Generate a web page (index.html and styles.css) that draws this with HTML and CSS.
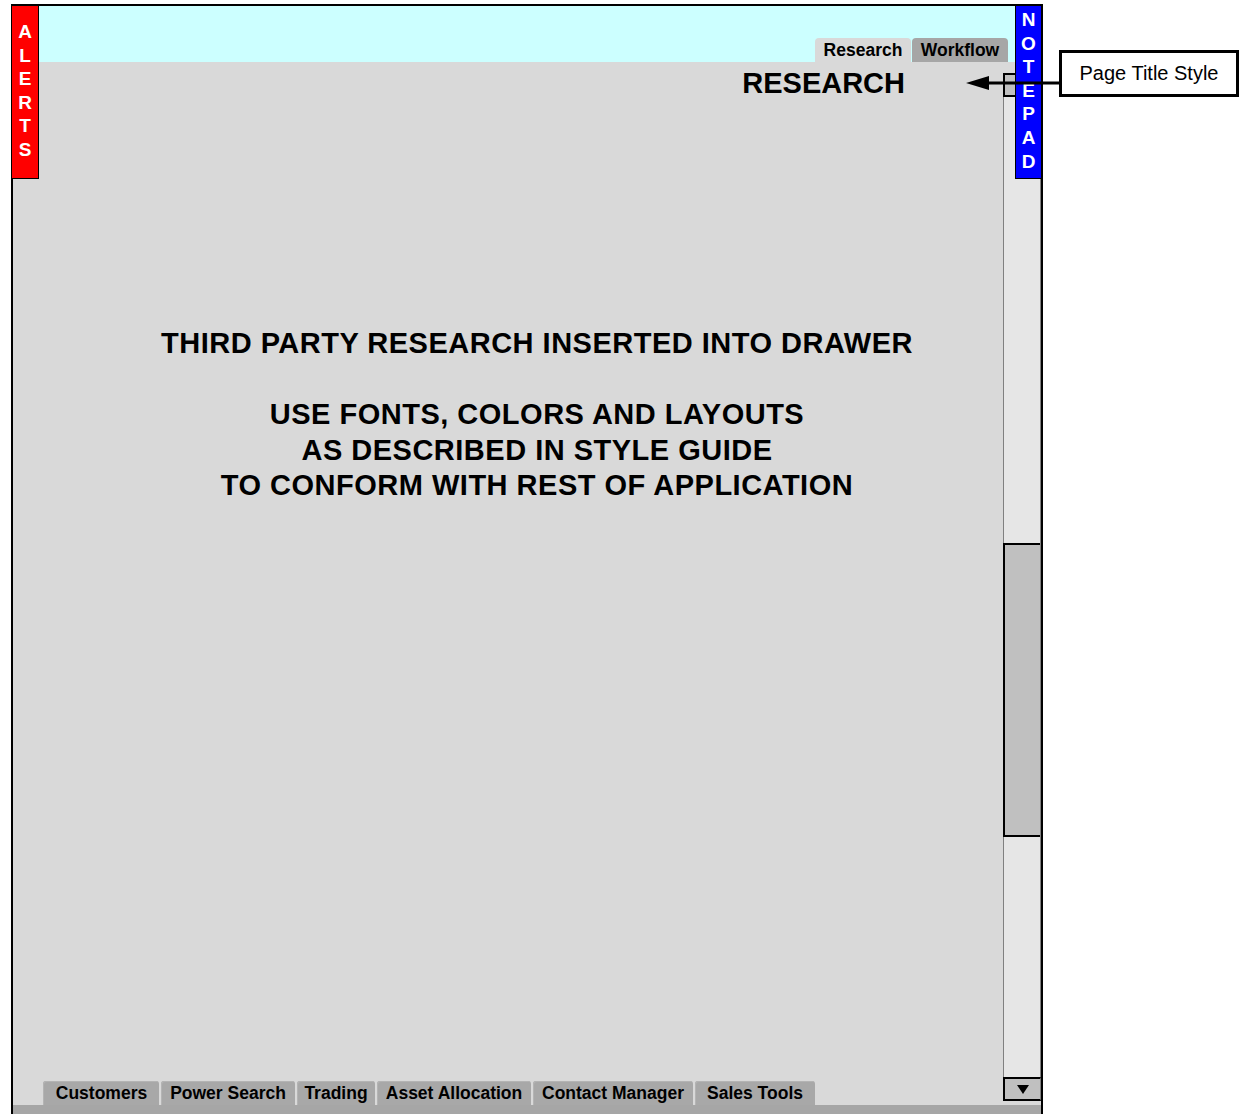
FILE: index.html
```html
<!DOCTYPE html>
<html lang="en">
<head>
<meta charset="utf-8">
<title>Research</title>
<link rel="stylesheet" href="styles.css">
</head>
<body>
<div class="frame">
  <header class="header">
    <nav class="top-tabs">
      <span class="top-tab top-tab--active">Research</span>
      <span class="top-tab">Workflow</span>
    </nav>
  </header>

  <div class="body">
    <main class="main">
      <h1 class="page-title">RESEARCH</h1>
      <div class="message">
        <p class="message-line">THIRD PARTY RESEARCH INSERTED INTO DRAWER</p>
        <p class="message-line message-line--gap">USE FONTS, COLORS AND LAYOUTS</p>
        <p class="message-line">AS DESCRIBED IN STYLE GUIDE</p>
        <p class="message-line">TO CONFORM WITH REST OF APPLICATION</p>
      </div>
      <nav class="bottom-tabs">
        <span class="bottom-tab tab-customers">Customers</span>
        <span class="bottom-tab tab-power">Power Search</span>
        <span class="bottom-tab tab-trading">Trading</span>
        <span class="bottom-tab tab-asset">Asset Allocation</span>
        <span class="bottom-tab tab-contact">Contact Manager</span>
        <span class="bottom-tab tab-sales">Sales Tools</span>
      </nav>
    </main>

    <div class="scrollbar">
      <div class="scroll-btn scroll-btn--up"></div>
      <div class="scroll-track">
        <div class="scroll-thumb"></div>
      </div>
      <div class="scroll-btn scroll-btn--down"><span class="tri-down"></span></div>
    </div>
  </div>

  <div class="bottom-strip"></div>

  <div class="drawer drawer--alerts">
    <span>A</span><span>L</span><span>E</span><span>R</span><span>T</span><span>S</span>
  </div>
  <div class="drawer drawer--notepad">
    <span>N</span><span>O</span><span>T</span><span>E</span><span>P</span><span>A</span><span>D</span>
  </div>
</div>

<!-- annotation: arrow pointing at the page title, with its label -->
<svg class="callout-arrow" width="94" height="18" viewBox="0 0 94 18">
  <polygon points="0,8 23,1 23,15" fill="#000"/>
  <rect x="20" y="6.5" width="74" height="3" fill="#000"/>
</svg>
<div class="callout">Page Title Style</div>
</body>
</html>
```

FILE: styles.css
```css
html, body {
  margin: 0;
  padding: 0;
  background: #ffffff;
  overflow: hidden;
}

body {
  width: 1245px;
  height: 1114px;
  position: relative;
  font-family: "Liberation Sans", Arial, sans-serif;
  color: #000;
}

/* application window */
.frame {
  position: absolute;
  left: 11px;
  top: 4px;
  width: 1028px;
  border: 2px solid #000;
  background: #d9d9d9;
  display: flex;
  flex-direction: column;
}

.header {
  height: 56px;
  background: #ccffff;
  display: flex;
  justify-content: flex-end;
  align-items: flex-end;
  padding-right: 33px;
}

.top-tabs {
  display: flex;
  gap: 1px;
}

.top-tab {
  width: 96px;
  height: 24px;
  line-height: 24px;
  text-align: center;
  font-size: 17.5px;
  font-weight: bold;
  background: #a6a6a6;
  border-radius: 4px 4px 0 0;
}

.top-tab--active {
  background: #d9d9d9;
}

.body {
  height: 1043px;
  display: flex;
}

.main {
  flex: 1;
  display: flex;
  flex-direction: column;
  padding-left: 30px;
}

.page-title {
  margin: 4px 0 0 0;
  padding-right: 98px;
  text-align: right;
  font-size: 29px;
  line-height: 34px;
  font-weight: bold;
}

.message {
  margin-top: 226px;
  padding-left: 28px;
  text-align: center;
}

.message-line {
  margin: 0;
  font-size: 29px;
  line-height: 35.5px;
  font-weight: bold;
  letter-spacing: 0.5px;
}

.message-line--gap {
  margin-top: 35.5px;
}

.bottom-tabs {
  margin-top: auto;
  display: flex;
  gap: 2px;
}

.bottom-tab {
  height: 24px;
  line-height: 24px;
  text-align: center;
  font-size: 17.5px;
  font-weight: bold;
  background: #a8a8a8;
  border-radius: 3px 3px 0 0;
  box-shadow: inset 1px 1px 0 #b4b4b4;
  white-space: nowrap;
}

.tab-customers { width: 116px; padding-left: 1px; box-sizing: border-box; }
.tab-power { width: 134px; }
.tab-trading { width: 78px; }
.tab-asset { width: 154px; }
.tab-contact { width: 160px; }
.tab-sales { width: 120px; }

/* vertical scrollbar */
.scrollbar {
  width: 38px;
  box-sizing: border-box;
  padding: 11px 0 4px 0;
  display: flex;
  flex-direction: column;
}

.scroll-btn {
  height: 24px;
  box-sizing: border-box;
  background: #c0c0c0;
  border: 2px solid #000;
  border-right: 1px solid #808080;
  display: flex;
  align-items: center;
  justify-content: center;
}

.tri-down {
  width: 0;
  height: 0;
  border-left: 6px solid transparent;
  border-right: 6px solid transparent;
  border-top: 9px solid #000;
}

.scroll-track {
  flex: 1;
  background: #e6e6e6;
  border-left: 1px solid #808080;
  border-right: 1px solid #808080;
  display: flex;
  flex-direction: column;
}

.scroll-thumb {
  margin-top: 446px;
  margin-left: -1px;
  height: 294px;
  box-sizing: border-box;
  background: #c0c0c0;
  border: 2px solid #000;
  border-right: none;
}

.bottom-strip {
  height: 12px;
  background: #a6a6a6;
}

/* side drawers */
.drawer {
  position: absolute;
  top: 0;
  width: 26px;
  height: 173px;
  box-sizing: border-box;
  display: flex;
  flex-direction: column;
  align-items: center;
  color: #fff;
  font-size: 19px;
  font-weight: bold;
  line-height: 23.6px;
}

.drawer--alerts {
  left: -1px;
  width: 27px;
  background: #ff0000;
  border-right: 1px solid #000;
  border-bottom: 1px solid #000;
  padding-top: 14px;
}

.drawer--notepad {
  right: 0;
  background: #0000ff;
  border-left: 1px solid #000;
  border-bottom: 1px solid #000;
  padding-top: 2px;
}

/* annotation */
.callout-arrow {
  position: absolute;
  left: 966px;
  top: 75px;
}

.callout {
  position: absolute;
  left: 1059px;
  top: 50px;
  width: 180px;
  height: 47px;
  box-sizing: border-box;
  border: 3px solid #000;
  background: #fff;
  display: flex;
  align-items: center;
  justify-content: center;
  font-size: 20px;
}
```
